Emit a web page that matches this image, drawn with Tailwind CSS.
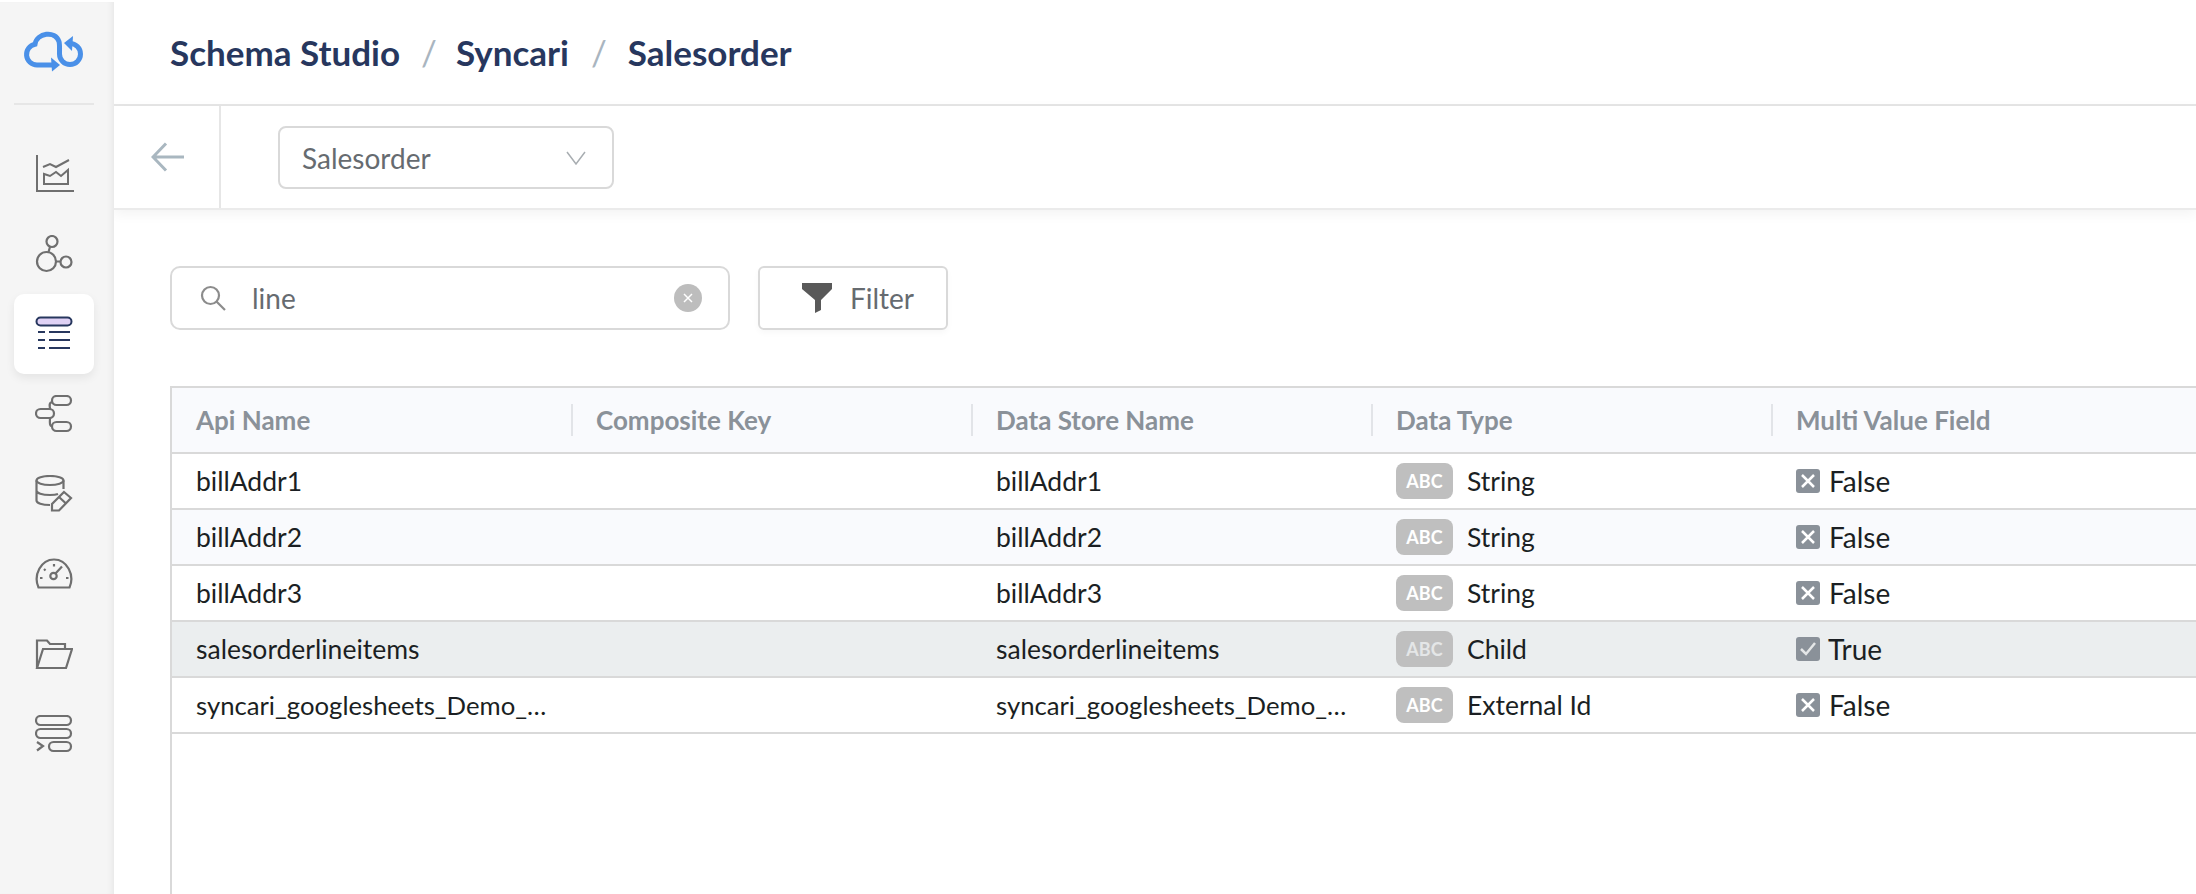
<!DOCTYPE html>
<html lang="en">
<head>
<meta charset="UTF-8">
<title>Schema Studio</title>
<script src="https://cdn.jsdelivr.net/npm/@tailwindcss/browser@4"></script>
</head>
<body class="h-[894px] w-[2196px] overflow-hidden bg-white font-['Lato',sans-serif] text-[26.500px] text-[#1b1f23]">
<div class="flex h-full">
    <!-- sidebar -->
    <aside class="z-10 mt-[2px] flex w-[114px] shrink-0 flex-col items-start bg-[#f5f5f5] pl-[14px] shadow-[inset_-6px_0_6px_-4px_rgba(0,0,0,0.06)]">
        <div class="flex h-[103px] w-[80px] shrink-0 items-center justify-center border-b-2 border-[#e6e6e6]">
            <svg width="60" height="42" viewBox="0 0 60 42" fill="none" stroke="#4a90e8" stroke-width="5" class="ml-[-2px] mt-[-4px]">
                <path d="M29 35H14A10.5 10.5 0 0 1 12 14.2C14 3 32 0 36 11.5C36.8 14 36.5 20 36.5 24A10.5 10.5 0 1 0 47 13.5"/>
                <path d="M28 27.500L37 35L29 41.500Z" fill="#4a90e8" stroke="none"/>
                <path d="M50 6L41 13L49 21Z" fill="#4a90e8" stroke="none"/>
            </svg>
        </div>
        <nav class="mt-[29px] flex flex-col">
            <a class="flex h-[80px] w-[80px] items-center justify-center">
                <svg width="40" height="38" viewBox="0 0 40 38" fill="none" stroke="#6f6f6f" stroke-width="2" class="ml-[2px]"><path d="M2 0V36H39"/><path d="M9 29V19L15 21L21 17L26 21L33 15V29Z"/><path d="M8 12L15 9L21 12L34 5"/></svg>
            </a>
            <a class="flex h-[80px] w-[80px] items-center justify-center">
                <svg width="38" height="38" viewBox="0 0 38 38" fill="none" stroke="#6f6f6f" stroke-width="2.200"><circle cx="17" cy="6.500" r="5.500"/><circle cx="11.500" cy="26.500" r="9.500"/><circle cx="31" cy="27" r="5.500"/><path d="M15 12L13.500 17M21 26.500H25.500"/></svg>
            </a>
            <a class="flex h-[80px] w-[80px] items-center justify-center rounded-[10px] bg-white shadow-[0_4px_10px_rgba(0,0,0,0.07)]">
                <svg width="38" height="36" viewBox="0 0 38 36" fill="none" stroke="#27375e" stroke-width="2"><rect x="1.500" y="1.500" width="35" height="8" rx="4" fill="#e0d2f5"/><path d="M3 16H10M14 16H35M3 24H10M14 24H35M3 32H10M14 32H35"/></svg>
            </a>
            <a class="flex h-[80px] w-[80px] items-center justify-center">
                <svg width="38" height="38" viewBox="0 0 38 38" fill="none" stroke="#6f6f6f" stroke-width="2.200"><rect x="17" y="1" width="19" height="9" rx="4.500"/><rect x="1" y="14" width="18" height="9" rx="4.500"/><rect x="17" y="27" width="19" height="9" rx="4.500"/><path d="M17 7C13 8 15 11 15 14M15 23C15 26 14 31 17 31"/></svg>
            </a>
            <a class="flex h-[80px] w-[80px] items-center justify-center">
                <svg width="38" height="38" viewBox="0 0 38 38" fill="none" stroke="#6f6f6f" stroke-width="2.200"><ellipse cx="15" cy="5.500" rx="13.500" ry="4.500"/><path d="M1.500 5.500V25.500C1.500 28 7 30 15 30M28.500 5.500V14M1.500 15.500C1.500 18 7 20 15 20C18 20 21 19.800 23 19"/><path d="M29 17L36 23L24 35.500H17V29Z"/><path d="M24 22L31 28.500"/></svg>
            </a>
            <a class="flex h-[80px] w-[80px] items-center justify-center">
                <svg width="38" height="32" viewBox="0 0 38 32" fill="none" stroke="#6f6f6f" stroke-width="2.200"><path d="M3.500 29.500C-2 17 6 1.500 19 1.500C32 1.500 40 17 34.500 29.500Z"/><circle cx="18.500" cy="18" r="3.200"/><path d="M20.500 15.500L27 8.500"/><path d="M5 20H7.500M31 20H33.500M9 11L10.500 12.500M19 6V8.500"/></svg>
            </a>
            <a class="flex h-[80px] w-[80px] items-center justify-center">
                <svg width="38" height="30" viewBox="0 0 38 30" fill="none" stroke="#6f6f6f" stroke-width="2.200"><path d="M2 29V1.500H12L15 5H30V9"/><path d="M2 29L8 10H37L31 29Z"/></svg>
            </a>
            <a class="flex h-[80px] w-[80px] items-center justify-center">
                <svg width="38" height="38" viewBox="0 0 38 38" fill="none" stroke="#6f6f6f" stroke-width="2.200"><rect x="1" y="1" width="35" height="9" rx="4.500"/><rect x="1" y="14" width="35" height="9" rx="4.500"/><rect x="14" y="27" width="22" height="9" rx="4.500"/><path d="M2 27L8 31L2 35.500"/></svg>
            </a>
        </nav>
    </aside>

    <div class="flex min-w-0 flex-1 flex-col">
        <!-- breadcrumb -->
        <header class="flex h-[106px] shrink-0 items-center gap-[21px] border-b-2 border-[#e6e6e6] pl-[56px] text-[35px] font-bold leading-none text-[#27375e]">
            <span>Schema Studio</span>
            <span class="font-normal text-[#a9b5c0]">/</span>
            <span class="mr-[1px] ml-[-2px]">Syncari</span>
            <span class="font-normal text-[#a9b5c0]">/</span>
            <span>Salesorder</span>
        </header>

        <!-- toolbar -->
        <div class="flex h-[104px] shrink-0 items-center border-b-2 border-[#ebebeb] shadow-[0_4px_12px_rgba(0,0,0,0.05)]">
            <div class="flex h-full w-[107px] items-center justify-center border-r-2 border-[#e6e6e6]">
                <svg width="34" height="30" viewBox="0 0 34 30" fill="none" stroke="#a9b7c0" stroke-width="3" class="ml-[2px]"><path d="M33 15H2M15 1.500L2 15L15 28.500"/></svg>
            </div>
            <div class="ml-[57px] mt-[1px] flex h-[63px] w-[336px] items-center justify-between rounded-[8px] border-2 border-[#d9d9d9] pl-[22px] pr-[26px] text-[28px] text-[#666b70]">
                <span>Salesorder</span>
                <svg width="20" height="14" viewBox="0 0 20 14" fill="none" stroke="#a8adb1" stroke-width="1.500"><path d="M1 1L10 13L19 1"/></svg>
            </div>
        </div>

        <main class="min-h-0 flex-1 pl-[56px] pt-[56px]">
            <div class="flex gap-[28px] text-[28px]">
                <div class="flex h-[64px] w-[560px] items-center rounded-[10px] border-2 border-[#d9d9d9] pl-[28px] pr-[26px] text-[#666b70]">
                    <svg width="26" height="26" viewBox="0 0 26 26" fill="none" stroke="#8c8c8c" stroke-width="2.200"><circle cx="10.500" cy="10.500" r="8.500"/><path d="M16.500 16.500L25 25"/></svg>
                    <span class="ml-[26px] flex-1">line</span>
                    <span class="flex h-[28px] w-[28px] items-center justify-center rounded-full bg-[#bdbdbd]">
                        <svg width="10" height="10" viewBox="0 0 10 10" stroke="#fff" stroke-width="1.500"><path d="M1 1L9 9M9 1L1 9"/></svg>
                    </span>
                </div>
                <div class="flex h-[64px] w-[190px] items-center rounded-[6px] border-2 border-[#d9d9d9] pl-[42px] text-[#666b70] shadow-[0_3px_6px_rgba(0,0,0,0.03)]">
                    <svg width="30" height="30" viewBox="0 0 30 30" fill="#595959"><path d="M0 0H30V6L19 17V27L13 30V17L0 6Z"/></svg>
                    <span class="ml-[18px]">Filter</span>
                </div>
            </div>

            <!-- table -->
            <div class="mt-[56px] h-[600px] border-l-2 border-t-2 border-[#d9d9d9]">
                <div class="grid h-[66px] grid-cols-[399px_400px_400px_400px_400px] items-center border-b-2 border-[#d9d9d9] bg-[#f9fafd] text-[26px] font-bold text-[#8a9199]">
                    <div class="pl-[24px]">Api Name</div>
                    <div class="border-l-2 border-[#e2e4e8] pl-[23px] leading-[32px]">Composite Key</div>
                    <div class="border-l-2 border-[#e2e4e8] pl-[23px] leading-[32px]">Data Store Name</div>
                    <div class="border-l-2 border-[#e2e4e8] pl-[23px] leading-[32px]">Data Type</div>
                    <div class="border-l-2 border-[#e2e4e8] pl-[23px] leading-[32px]">Multi Value Field</div>
                </div>

                <div class="grid h-[56px] grid-cols-[399px_400px_400px_400px_400px] items-center border-b-2 border-[#d9d9d9]">
                    <div class="pl-[24px] pt-[1px]">billAddr1</div><div></div>
                    <div class="pl-[25px] pt-[1px]">billAddr1</div>
                    <div class="flex items-center pl-[25px]"><span class="mr-[14px] flex h-[36px] w-[57px] items-center justify-center rounded-[8px] bg-[#bfbfbf] text-[18px] font-bold text-white">ABC</span><span class="pt-[1px]">String</span></div>
                    <div class="flex items-center pl-[25px] text-[28px]"><span class="mr-[9px] flex h-[24px] w-[24px] items-center justify-center rounded-[3px] bg-[#8a9199]"><svg width="14" height="14" viewBox="0 0 14 14" stroke="#fff" stroke-width="2.500"><path d="M1 1L13 13M13 1L1 13"/></svg></span>False</div>
                </div>
                <div class="grid h-[56px] grid-cols-[399px_400px_400px_400px_400px] items-center border-b-2 border-[#d9d9d9] bg-[#f9fafd]">
                    <div class="pl-[24px] pt-[1px]">billAddr2</div><div></div>
                    <div class="pl-[25px] pt-[1px]">billAddr2</div>
                    <div class="flex items-center pl-[25px]"><span class="mr-[14px] flex h-[36px] w-[57px] items-center justify-center rounded-[8px] bg-[#bfbfbf] text-[18px] font-bold text-white">ABC</span><span class="pt-[1px]">String</span></div>
                    <div class="flex items-center pl-[25px] text-[28px]"><span class="mr-[9px] flex h-[24px] w-[24px] items-center justify-center rounded-[3px] bg-[#8a9199]"><svg width="14" height="14" viewBox="0 0 14 14" stroke="#fff" stroke-width="2.500"><path d="M1 1L13 13M13 1L1 13"/></svg></span>False</div>
                </div>
                <div class="grid h-[56px] grid-cols-[399px_400px_400px_400px_400px] items-center border-b-2 border-[#d9d9d9]">
                    <div class="pl-[24px] pt-[1px]">billAddr3</div><div></div>
                    <div class="pl-[25px] pt-[1px]">billAddr3</div>
                    <div class="flex items-center pl-[25px]"><span class="mr-[14px] flex h-[36px] w-[57px] items-center justify-center rounded-[8px] bg-[#bfbfbf] text-[18px] font-bold text-white">ABC</span><span class="pt-[1px]">String</span></div>
                    <div class="flex items-center pl-[25px] text-[28px]"><span class="mr-[9px] flex h-[24px] w-[24px] items-center justify-center rounded-[3px] bg-[#8a9199]"><svg width="14" height="14" viewBox="0 0 14 14" stroke="#fff" stroke-width="2.500"><path d="M1 1L13 13M13 1L1 13"/></svg></span>False</div>
                </div>
                <div class="grid h-[56px] grid-cols-[399px_400px_400px_400px_400px] items-center border-b-2 border-[#d9d9d9] bg-[#ebeeef]">
                    <div class="pl-[24px] pt-[1px]">salesorderlineitems</div><div></div>
                    <div class="pl-[25px] pt-[1px]">salesorderlineitems</div>
                    <div class="flex items-center pl-[25px]"><span class="mr-[14px] flex h-[36px] w-[57px] items-center justify-center rounded-[8px] bg-[#bfbfbf] text-[18px] font-bold text-[#e4e6e7]">ABC</span><span class="pt-[1px]">Child</span></div>
                    <div class="flex items-center pl-[25px] text-[28px]"><span class="mr-[8px] flex h-[24px] w-[24px] items-center justify-center rounded-[3px] bg-[#8a9199]"><svg width="16" height="14" viewBox="0 0 16 14" fill="none" stroke="#e4e6e7" stroke-width="2.500"><path d="M1 7L6 12L15 1"/></svg></span>True</div>
                </div>
                <div class="grid h-[56px] grid-cols-[399px_400px_400px_400px_400px] items-center border-b-2 border-[#d9d9d9]">
                    <div class="whitespace-nowrap pl-[24px] pt-[1px] text-[25.700px]">syncari_googlesheets_Demo_…</div><div></div>
                    <div class="whitespace-nowrap pl-[25px] pt-[1px] text-[25.700px]">syncari_googlesheets_Demo_…</div>
                    <div class="flex items-center pl-[25px]"><span class="mr-[14px] flex h-[36px] w-[57px] items-center justify-center rounded-[8px] bg-[#bfbfbf] text-[18px] font-bold text-white">ABC</span><span class="pt-[1px]">External Id</span></div>
                    <div class="flex items-center pl-[25px] text-[28px]"><span class="mr-[9px] flex h-[24px] w-[24px] items-center justify-center rounded-[3px] bg-[#8a9199]"><svg width="14" height="14" viewBox="0 0 14 14" stroke="#fff" stroke-width="2.500"><path d="M1 1L13 13M13 1L1 13"/></svg></span>False</div>
                </div>
            </div>
        </main>
    </div>
</div>
</body>
</html>
